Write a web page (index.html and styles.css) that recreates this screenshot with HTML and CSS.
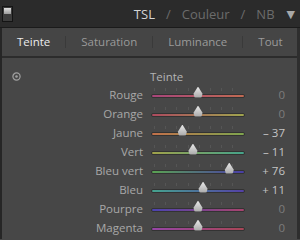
FILE: index.html
```html
<!DOCTYPE html>
<html lang="fr">

<head>
    <meta charset="UTF-8">
    <title>TSL</title>
    <link rel="stylesheet" href="styles.css">
</head>

<body>
    <header class="topbar">
        <span class="switch"><span></span></span>
        <nav class="modes">
            <span class="on">TSL</span>
            <span class="slash">/</span>
            <span>Couleur</span>
            <span class="slash">/</span>
            <span>NB</span>
            <span class="caret">&#9660;</span>
        </nav>
    </header>
    <section class="panel">
        <div class="tabs">
            <span class="tab active">Teinte</span>
            <span class="tab">Saturation</span>
            <span class="tab">Luminance</span>
            <span class="tab">Tout</span>
        </div>
        <div class="sliders">
            <div class="head">
                <svg class="target" width="9" height="9" viewBox="0 0 9 9">
                    <circle cx="4.5" cy="4.5" r="3.6" fill="none" stroke="#a0a0a0" stroke-width="1.2"/>
                    <circle cx="4.5" cy="4.5" r="1.3" fill="#a0a0a0"/>
                </svg>
                <span class="title">Teinte</span>
            </div>
            <div class="row">
                <span class="label">Rouge</span>
                <span class="track rouge"><i style="left:50%"></i></span>
                <span class="val">0</span>
            </div>
            <div class="row">
                <span class="label">Orange</span>
                <span class="track orange"><i style="left:50%"></i></span>
                <span class="val">0</span>
            </div>
            <div class="row">
                <span class="label">Jaune</span>
                <span class="track jaune"><i style="left:33%"></i></span>
                <span class="val set">&ndash; 37</span>
            </div>
            <div class="row">
                <span class="label">Vert</span>
                <span class="track vert"><i style="left:44.5%"></i></span>
                <span class="val set">&ndash; 11</span>
            </div>
            <div class="row">
                <span class="label">Bleu vert</span>
                <span class="track bleuvert"><i style="left:84%"></i></span>
                <span class="val set">+ 76</span>
            </div>
            <div class="row">
                <span class="label">Bleu</span>
                <span class="track bleu"><i style="left:55.5%"></i></span>
                <span class="val set">+ 11</span>
            </div>
            <div class="row">
                <span class="label">Pourpre</span>
                <span class="track pourpre"><i style="left:50%"></i></span>
                <span class="val">0</span>
            </div>
            <div class="row">
                <span class="label">Magenta</span>
                <span class="track magenta"><i style="left:50%"></i></span>
                <span class="val">0</span>
            </div>
        </div>
    </section>
</body>

</html>
```

FILE: styles.css
```css
* {
    box-sizing: border-box;
    padding: 0;
    margin: 0;
}

body {
    width: 300px;
    height: 240px;
    overflow: hidden;
    background: #474747;
    font-family: "Open Sans", "DejaVu Sans", sans-serif;
    color: #b0b0b0;
}

.topbar {
    height: 28px;
    background: #2b2b2b;
    border-bottom: 1px solid #1b1b1b;
    display: flex;
    align-items: center;
    padding: 0 5px 0 2px;
}

.switch {
    width: 11px;
    height: 16px;
    border: 1px solid #141414;
    background: #3c3c3c;
    padding: 1px;
    margin-top: 1px;
}

.switch span {
    display: block;
    height: 6px;
    background: linear-gradient(#e0e0e0, #9a9a9a);
}

.modes {
    margin-left: auto;
    display: flex;
    align-items: center;
    gap: 11px;
    font-size: 13px;
    color: #6c6c6c;
}

.modes .on {
    color: #d4d4d4;
}

.modes .caret {
    font-size: 11px;
    color: #a8a8a8;
    margin-left: 1px;
}

.panel {
    border-left: 2px solid #262626;
    border-right: 3px solid #2e2e2e;
    height: 211px;
}

.tabs {
    display: flex;
    align-items: center;
    height: 30px;
    background: #454545;
    border-bottom: 2px solid #2c2c2c;
    font-size: 11.5px;
    color: #9a9a9a;
}

.tab {
    padding: 0 15px;
    border-left: 1px solid #3a3a3a;
    line-height: 12px;
}

.tab:first-child {
    border-left: none;
}

.tab.active {
    color: #ececec;
}

.sliders {
    padding-top: 9px;
}

.head {
    display: flex;
    align-items: center;
    height: 18px;
    padding-left: 10px;
    font-size: 11.5px;
    color: #b4b4b4;
}

.head .title {
    margin-left: 129px;
}

.row {
    display: grid;
    grid-template-columns: 141px 94px 1fr;
    column-gap: 8px;
    align-items: center;
    height: 19px;
    font-size: 11.5px;
}

.label {
    text-align: right;
    color: #a8a8a8;
}

.track {
    position: relative;
    height: 4px;
    border-radius: 2px;
    border: 1px solid #333;
    background-size: 100% 100%;
    margin-top: 2px;
}

.track::before {
    content: "";
    position: absolute;
    left: 2px;
    right: 2px;
    top: -7px;
    height: 3px;
    background: repeating-linear-gradient(90deg, #555 0 1px, transparent 1px 11.2px);
}

.track i {
    position: absolute;
    top: -8px;
    width: 10px;
    height: 11px;
    margin-left: -5px;
    background: linear-gradient(#e8e8e8, #a8a8a8);
    clip-path: polygon(50% 0, 95% 65%, 85% 100%, 15% 100%, 5% 65%);
    border-radius: 0 0 3px 3px;
}

.val {
    text-align: right;
    padding-right: 12px;
    color: #7c7c7c;
}

.val.set {
    color: #c4c4c4;
}

.rouge { background-image: linear-gradient(90deg, #a8457a, #c06a52); }
.orange { background-image: linear-gradient(90deg, #ad4a5e, #9fa44e); }
.jaune { background-image: linear-gradient(90deg, #c2704a, #7fa54e); }
.vert { background-image: linear-gradient(90deg, #a0a24a, #45a38a); }
.bleuvert { background-image: linear-gradient(90deg, #5aa252, #4a3ea6); }
.bleu { background-image: linear-gradient(90deg, #45a38e, #5440a6); }
.pourpre { background-image: linear-gradient(90deg, #4b43b0, #a8446e); }
.magenta { background-image: linear-gradient(90deg, #9645a6, #a84656); }
```
